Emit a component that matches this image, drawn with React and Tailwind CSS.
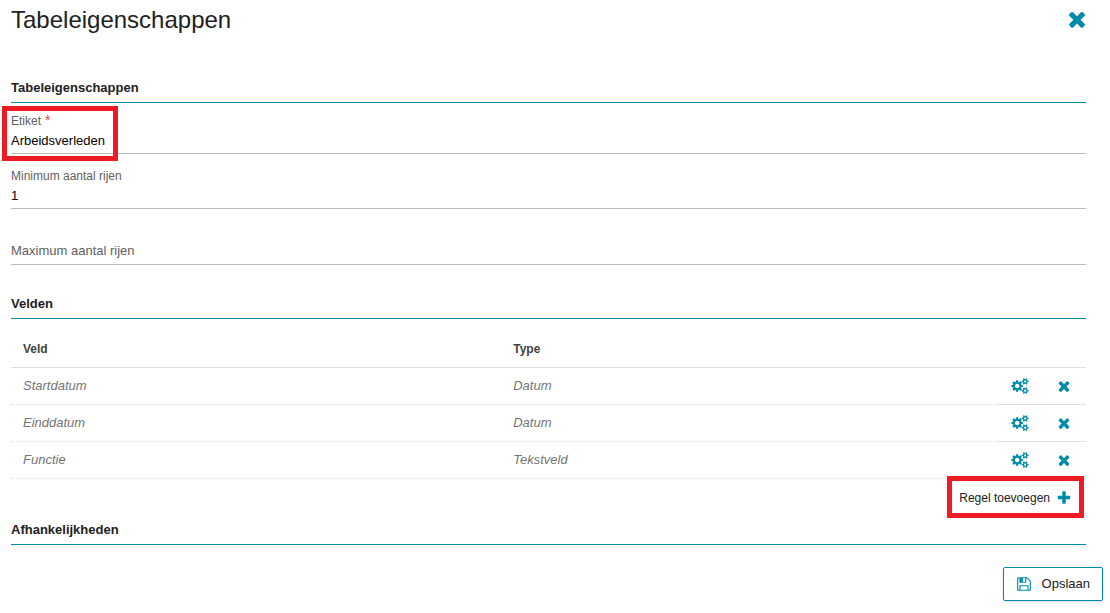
import React, { useState } from 'react';

const ICON_PATHS = {
  times:
    'M1490 1322q0 40-28 68l-136 136q-28 28-68 28t-68-28l-294-294-294 294q-28 28-68 28t-68-28l-136-136q-28-28-28-68t28-68l294-294-294-294q-28-28-28-68t28-68l136-136q28-28 68-28t68 28l294 294 294-294q28-28 68-28t68 28l136 136q28 28 28 68t-28 68l-294 294 294 294q28 28 28 68z',
  plus:
    'M1600 736v192q0 40-28 68t-68 28h-416v416q0 40-28 68t-68 28h-192q-40 0-68-28t-28-68v-416h-416q-40 0-68-28t-28-68v-192q0-40 28-68t68-28h416v-416q0-40 28-68t68-28h192q40 0 68 28t28 68v416h416q40 0 68 28t28 68z',
  save:
    'M512 1536h768v-384h-768v384zm896 0h128v-896q0-14-10-38.5t-20-34.5l-281-281q-10-10-34-20t-39-10v416q0 40-28 68t-68 28h-576q-40 0-68-28t-28-68v-416h-128v1280h128v-416q0-40 28-68t68-28h832q40 0 68 28t28 68v416zm-384-928v-320q0-13-9.5-22.5t-22.5-9.5h-192q-13 0-22.5 9.5t-9.5 22.5v320q0 13 9.5 22.5t22.5 9.5h192q13 0 22.5-9.5t9.5-22.5zm640 32v928q0 40-28 68t-68 28h-1344q-40 0-68-28t-28-68v-1344q0-40 28-68t68-28h928q40 0 88 20t76 48l280 280q28 28 48 76t20 88z',
  cogs:
    'M832 896q0-106-75-181t-181-75-181 75-75 181 75 181 181 75 181-75 75-181zm768 512q0-52-38-90t-90-38-90 38-38 90q0 53 37.5 90.5t90.5 37.5 90.5-37.5 37.5-90.5zm0-1024q0-52-38-90t-90-38-90 38-38 90q0 53 37.5 90.5t90.5 37.5 90.5-37.5 37.5-90.5zm-384 421v185q0 10-7 19.5t-16 10.5l-155 24q-11 35-32 76 34 48 90 115 7 11 7 20 0 12-7 19-23 30-82.5 89.5t-78.5 59.5q-11 0-21-7l-115-90q-37 19-77 31-11 108-23 155-7 24-30 24h-186q-11 0-20-7.5t-10-17.5l-23-153q-34-10-75-31l-118 89q-7 7-20 7-11 0-21-8-144-133-144-160 0-9 7-19 10-14 41-53t47-61q-23-44-35-82l-152-24q-10-1-17-9.5t-7-19.5v-185q0-10 7-19.5t16-10.5l155-24q11-35 32-76-34-48-90-115-7-11-7-20 0-12 7-20 22-30 82-89t79-59q11 0 21 7l115 90q34-18 77-32 11-108 23-154 7-24 30-24h186q11 0 20 7.5t10 17.5l23 153q34 10 75 31l118-89q8-7 20-7 11 0 21 8 144 133 144 160 0 8-7 19-12 16-42 54t-45 60q23 48 34 82l152 23q10 2 17 10.5t7 19.5zm640 533v140q0 16-149 31-12 27-30 52 51 113 51 138 0 4-4 7-122 71-124 71-8 0-46-47t-52-68q-20 2-30 2t-30-2q-14 21-52 68t-46 47q-2 0-124-71-4-3-4-7 0-25 51-138-18-25-30-52-149-15-149-31v-140q0-16 149-31 13-29 30-52-51-113-51-138 0-4 4-7 4-2 35-20t59-34 30-16q8 0 46 46.5t52 67.5q20-2 30-2t30 2q51-71 92-112l6-2q4 0 124 70 4 3 4 7 0 25-51 138 17 23 30 52 149 15 149 31zm0-1024v140q0 16-149 31-12 27-30 52 51 113 51 138 0 4-4 7-122 71-124 71-8 0-46-47t-52-68q-20 2-30 2t-30-2q-14 21-52 68t-46 47q-2 0-124-71-4-3-4-7 0-25 51-138-18-25-30-52-149-15-149-31v-140q0-16 149-31 13-29 30-52-51-113-51-138 0-4 4-7 4-2 35-20t59-34 30-16q8 0 46 46.5t52 67.5q20-2 30-2t30 2q51-71 92-112l6-2q4 0 124 70 4 3 4 7 0 25-51 138 17 23 30 52 149 15 149 31z'
};

const Icon = ({ name, viewBox = '0 0 1792 1792', className = 'h-4 w-4' }) => (
  <svg viewBox={viewBox} className={className} fill="currentColor" aria-hidden="true">
    <path d={ICON_PATHS[name]} />
  </svg>
);

const SectionTitle = ({ children }) => (
  <h2 className="border-b border-[#008ba8] pb-1.5 text-[13px] leading-4 font-bold text-[#212121]">
    {children}
  </h2>
);

// The label floats above the value, or rests on the line while the field is empty
const TextField = ({ id, label, value, onChange, required }) => (
  <div className="relative flex flex-col border-b border-[#bdbdbd] pt-3.5 pb-0.5">
    <label
      htmlFor={id}
      className={
        value
          ? 'h-4 text-xs leading-4 text-[#616161]'
          : 'absolute bottom-[3px] text-[13px] leading-5 text-[#616161]'
      }
    >
      {label}
      {required && <span className="text-sm leading-none text-[#f44336]"> *</span>}
    </label>
    {!value && <div className="h-[17px]" />}
    <input
      id={id}
      type="text"
      value={value}
      onChange={(e) => onChange(e.target.value)}
      className="h-[22px] w-full bg-transparent text-[13px] text-black outline-none"
    />
  </div>
);

const App = () => {
  const [form, setForm] = useState({ label: 'Arbeidsverleden', min: '1', max: '' });
  const [fields, setFields] = useState([
    { id: 1, name: 'Startdatum', type: 'Datum' },
    { id: 2, name: 'Einddatum', type: 'Datum' },
    { id: 3, name: 'Functie', type: 'Tekstveld' }
  ]);

  const update = (key) => (value) => setForm({ ...form, [key]: value });

  const addField = () => {
    setFields([...fields, { id: Date.now(), name: 'Nieuw veld', type: 'Tekstveld' }]);
  };

  const removeField = (id) => {
    setFields(fields.filter((field) => field.id !== id));
  };

  return (
    <div className="min-h-screen bg-white pb-3 font-['Liberation_Sans',Arial,sans-serif]">
      <div className="pr-6 pl-[11px]">
        {/* Header */}
        <header className="flex items-center justify-between pt-1">
          <h1 className="text-2xl leading-8 text-[#212121]">Tabeleigenschappen</h1>
          <button type="button" aria-label="Sluiten" className="-mr-[3px] mb-0.5 text-[#008ba8]">
            <Icon name="times" className="h-6 w-6" />
          </button>
        </header>

        {/* Table properties */}
        <section className="pt-11">
          <SectionTitle>Tabeleigenschappen</SectionTitle>
          <div className="relative -mt-1">
            <TextField
              id="label"
              label="Etiket"
              value={form.label}
              onChange={update('label')}
              required
            />
            <div className="pointer-events-none absolute top-[7px] -left-[9px] h-[55px] w-[116px] border-5 border-[#ed1c24]" />
          </div>
          <TextField
            id="min"
            label="Minimum aantal rijen"
            value={form.min}
            onChange={update('min')}
          />
          <TextField
            id="max"
            label="Maximum aantal rijen"
            value={form.max}
            onChange={update('max')}
          />
        </section>

        {/* Fields */}
        <section className="pt-[31px]">
          <SectionTitle>Velden</SectionTitle>
          <table className="w-full table-fixed border-collapse text-left text-[13px]">
            <thead>
              <tr className="h-12 border-b border-[#e0e0e0] text-xs text-[#424242]">
                <th className="w-[45.6%] pt-3 pl-3">Veld</th>
                <th className="pt-3 pl-3">Type</th>
                <td className="w-11" />
                <td className="w-11" />
              </tr>
            </thead>
            <tbody>
              {fields.map((field) => (
                <tr key={field.id} className="h-[37px]">
                  <td className="border-b border-dotted border-[#e0e0e0] pl-3 text-[#757575] italic">
                    {field.name}
                  </td>
                  <td className="border-b border-dotted border-[#e0e0e0] pl-3 text-[#757575] italic">
                    {field.type}
                  </td>
                  <td className="border-b border-[#e0e0e0]">
                    <button
                      type="button"
                      aria-label={`${field.name} instellen`}
                      className="flex w-full justify-center text-[#008ba8]"
                    >
                      <Icon name="cogs" viewBox="-64 0 1920 1792" className="h-4 w-[18px]" />
                    </button>
                  </td>
                  <td className="border-b border-[#e0e0e0]">
                    <button
                      type="button"
                      aria-label={`${field.name} verwijderen`}
                      className="flex w-full justify-center text-[#008ba8]"
                      onClick={() => removeField(field.id)}
                    >
                      <Icon name="times" />
                    </button>
                  </td>
                </tr>
              ))}
            </tbody>
          </table>
          <div className="flex justify-end">
            <div className="relative">
              <button
                type="button"
                onClick={addField}
                className="flex h-[38px] items-center gap-1.5 pr-[14px] text-xs text-[#212121]"
              >
                Regel toevoegen
                <Icon name="plus" className="h-4 w-4 text-[#008ba8]" />
              </button>
              <div className="pointer-events-none absolute -top-[3px] right-[2px] h-[42px] w-[137px] border-5 border-[#ed1c24]" />
            </div>
          </div>
        </section>

        {/* Dependencies */}
        <section className="pt-[5px]">
          <SectionTitle>Afhankelijkheden</SectionTitle>
        </section>
      </div>

      <footer className="flex justify-end pt-[22px] pr-[7px]">
        <button
          type="button"
          className="flex h-[34px] w-[100px] items-center justify-between rounded-xs border border-[#008ba8] bg-white px-3 text-[13px] text-[#212121] shadow"
        >
          <Icon name="save" className="h-4 w-4 text-[#008ba8]" />
          Opslaan
        </button>
      </footer>
    </div>
  );
};

export default App;
